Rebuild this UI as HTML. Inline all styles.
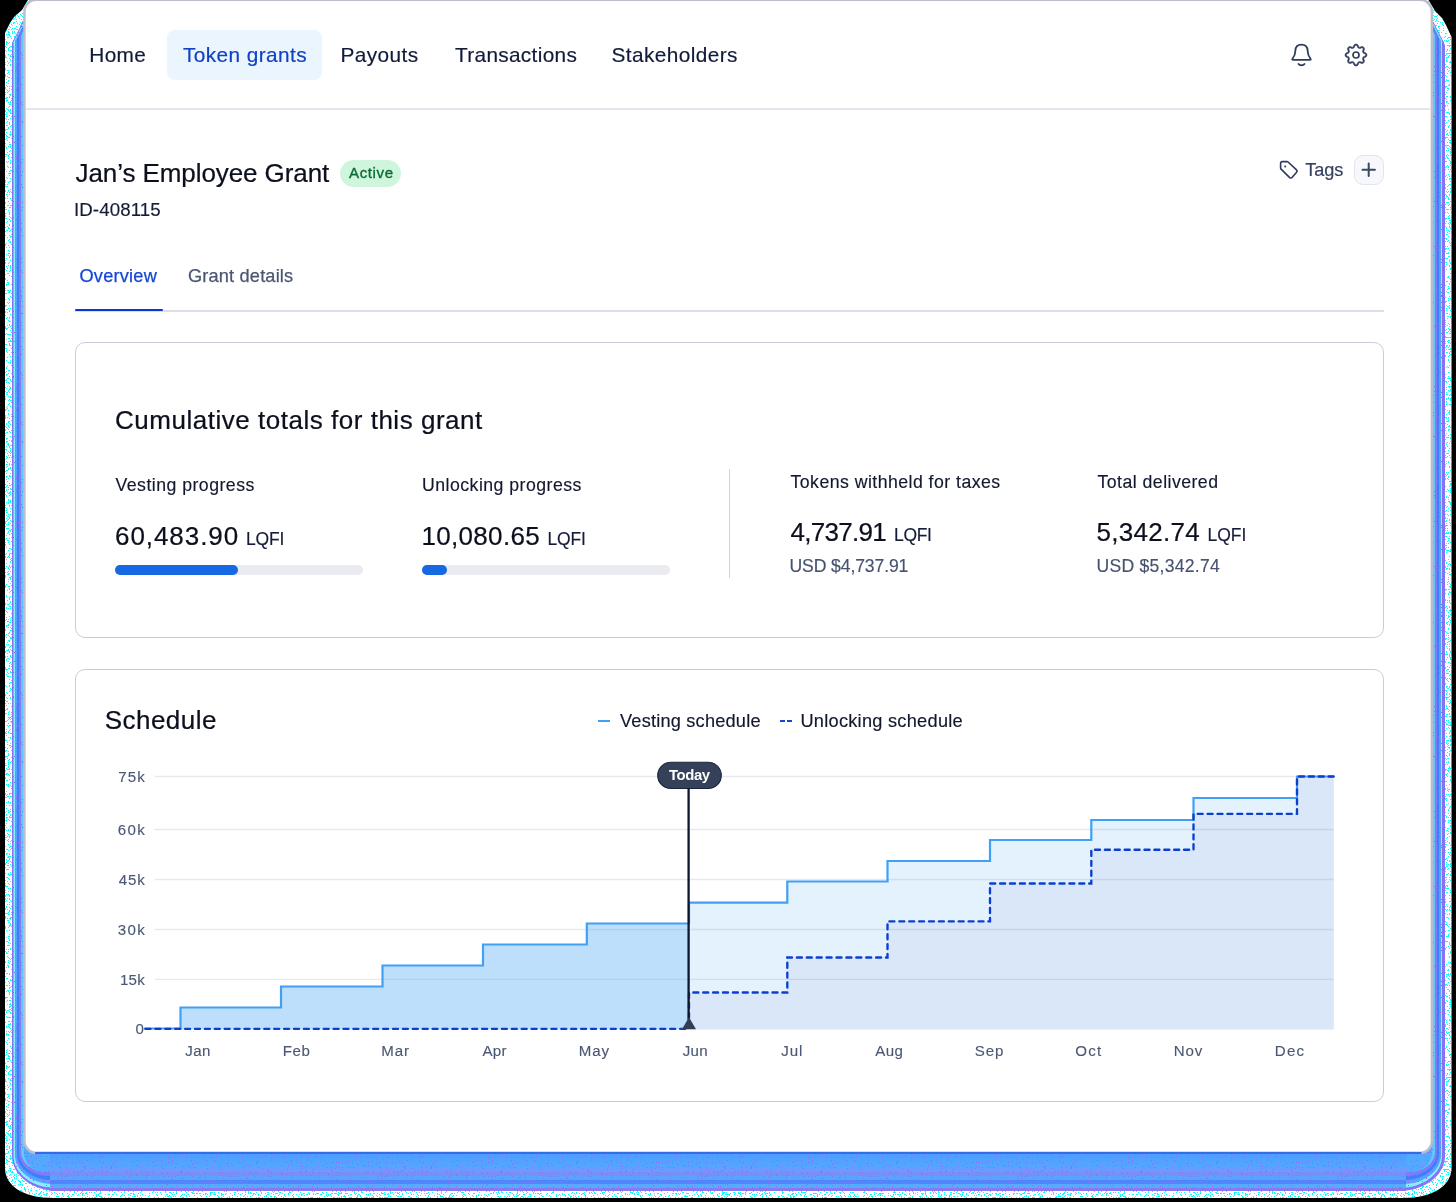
<!DOCTYPE html>
<html lang="en">
<head>
<meta charset="utf-8">
<title>Jan's Employee Grant</title>
<style>
*{box-sizing:border-box;margin:0;padding:0}
html,body{width:1456px;height:1202px;overflow:hidden;background:#000}
body{position:relative;font-family:"Liberation Sans",sans-serif;font-size:16px;color:#0f1733}
.abs{position:absolute}
.t{position:absolute;white-space:nowrap;line-height:1;font-family:"Liberation Sans",sans-serif}
#shadow{position:absolute;left:0;top:0;width:1456px;height:1202px}
#card{position:absolute;left:22.5px;top:-1px;width:1410.3px;height:1154.3px;background:#fff;border:2px solid #b6bbcb;border-top-color:#c6cad7;border-bottom:1.5px solid #1a5cf0;border-radius:13px}
#page{will-change:transform;position:absolute;left:0;top:0;width:1456px;height:1202px}
.panel{border:1.5px solid #c9cdd9;border-radius:10px;background:#fff}
.bar{height:10px;border-radius:5px;background:#e9ebf0}
.fill{height:10px;border-radius:5px;background:#1668e3}
svg{position:absolute;overflow:visible}
</style>
</head>
<body>
<svg id="shadow" width="1456" height="1202" viewBox="0 0 1456 1202">
  <defs><filter id="nz" x="0" y="0" width="1456" height="1202" filterUnits="userSpaceOnUse" color-interpolation-filters="sRGB">
    <feTurbulence type="fractalNoise" baseFrequency="0.75" numOctaves="2" seed="7" result="t"/>
    <feColorMatrix in="t" type="matrix" values="0 0 0 0 0  0 0 0 0 1  0 0 0 0 1  3.2 0 0 0 -1.43" result="c"/>
    <feComponentTransfer in="c" result="d"><feFuncA type="discrete" tableValues="0 1"/></feComponentTransfer>
    <feComposite in="d" in2="SourceGraphic" operator="in"/>
  </filter></defs>
  <path d="M28 0 L22 10 L14 17 L10 23 L5 33 V1168 C5 1185 22 1198 54 1198 H1402.5 C1434 1198 1451.5 1185 1451.5 1168 V37 L1446 25 L1442 18 L1435 11 L1428.5 0 Z" fill="#fbffff"/>
  <path d="M28 0 L22 10 L14 17 L10 23 L5 33 V1168 C5 1185 22 1198 54 1198 H1402.5 C1434 1198 1451.5 1185 1451.5 1168 V37 L1446 25 L1442 18 L1435 11 L1428.5 0 Z" fill="#00ffff" filter="url(#nz)"/>
  <path d="M22.5 22 L12 43.0 V1156 C12 1175.2 32.7 1191 58 1191 H1399 C1424.3 1191 1445 1175.2 1445 1156 V45.0 L1433.5 22 Z" fill="#8673f4"/>
  <path d="M22.5 24 L13.5 42.0 V1156 C13.5 1173.6 32.4 1188 55.5 1188 H1400 C1423.1 1188 1442 1173.6 1442 1156 V41.0 L1433.5 24 Z" fill="#86eeff"/>
  <path d="M22.5 26 L15 41.0 V1155 C15 1171.0 32.1 1184 53 1184 H1403 C1423.9 1184 1441 1171.0 1441 1155 V41.0 L1433.5 26 Z" fill="#56a2ff"/>
  <path d="M22.5 28 L17 39.0 V1154 C17 1168.3 32.3 1180 51 1180 H1405 C1423.7 1180 1439 1168.3 1439 1154 V39.0 L1433.5 28 Z" fill="#3f7dff"/>
  <path d="M22.5 30 L19 37.0 V1153 C19 1165.7 32.5 1176 49 1176 H1407 C1423.5 1176 1437 1165.7 1437 1153 V37.0 L1433.5 30 Z" fill="#7f7cf6"/>
  <path d="M22.5 32 L21 35.0 V1152 C21 1163.0 32.7 1172 47 1172 H1409 C1423.3 1172 1435 1163.0 1435 1152 V35.0 L1433.5 32 Z" fill="#60c8ff"/>
  <path d="M24 1100 V1152 C24 1163.0 32.7 1172 47 1172 H1409 C1423.3 1172 1432 1163.0 1432 1152 V1100 Z" fill="#55a8ff"/>
  <defs><linearGradient id="bg" x1="0" y1="0" x2="0" y2="1">
    <stop offset="0" stop-color="#1a5cf0"/><stop offset=".05" stop-color="#1a5cf0"/>
    <stop offset=".05" stop-color="#4d9fff"/><stop offset=".41" stop-color="#55a6ff"/>
    <stop offset=".41" stop-color="#6a9cff"/><stop offset=".51" stop-color="#6a9cff"/>
    <stop offset=".51" stop-color="#7a8ef8"/><stop offset=".61" stop-color="#7a8ef8"/>
    <stop offset=".61" stop-color="#58a4ff"/><stop offset=".72" stop-color="#58a4ff"/>
    <stop offset=".72" stop-color="#4a86ff"/><stop offset=".82" stop-color="#5a84fa"/>
    <stop offset=".82" stop-color="#58aaff"/><stop offset=".92" stop-color="#58aaff"/>
    <stop offset=".92" stop-color="#8a78f0"/><stop offset="1" stop-color="#8a78f0"/>
  </linearGradient></defs>
  <rect x="50" y="1152" width="1356" height="39" fill="url(#bg)"/>
  <defs><filter id="nz2" x="0" y="0" width="1456" height="1202" filterUnits="userSpaceOnUse" color-interpolation-filters="sRGB">
    <feTurbulence type="fractalNoise" baseFrequency="0.8" numOctaves="2" seed="23" result="t"/>
    <feColorMatrix in="t" type="matrix" values="0 0 0 0 .53  0 0 0 0 .44  0 0 0 0 .96  3.2 0 0 0 -1.78" result="c"/>
    <feComponentTransfer in="c" result="d"><feFuncA type="discrete" tableValues="0 1"/></feComponentTransfer>
    <feComposite in="d" in2="SourceGraphic" operator="in"/>
  </filter></defs>
  <path d="M22.5 22 L12 43.0 V1156 C12 1175.2 32.7 1191 58 1191 H1399 C1424.3 1191 1445 1175.2 1445 1156 V45.0 L1433.5 22 Z" fill="#8870f5" filter="url(#nz2)"/>
</svg>
<svg style="left:0;top:0" width="1456" height="1202" viewBox="0 0 1456 1202">
  <rect x="24.4" y="-0.2" width="1407.5" height="1153" rx="12" fill="#fff" stroke="#b9bdcc" stroke-width="2.5"/>
  <path d="M35 1153 H1421.5" stroke="#0d4ff0" stroke-width="1.5"/>
</svg>
<div id="page">
  <!-- NAV -->
  <div class="abs" style="left:167px;top:30px;width:154.5px;height:49.5px;background:#ebf5fe;border-radius:8px"></div>
  <div class="abs" style="left:25.5px;top:108px;width:1405px;height:1.6px;background:#e3e6ed"></div>
  <!-- bell -->
  <svg style="left:1289px;top:42px" width="24" height="26" viewBox="0 0 24 26" fill="none" stroke="#2e3b59" stroke-width="1.8" stroke-linecap="round" stroke-linejoin="round">
    <path d="M4.1 17.8 H20.9 Q22.3 17.8 21.5 16.8 C19.6 14.5 18.7 12.6 18.6 8.6 C18.5 4.6 16 2.6 12.5 2.6 C9 2.6 6.5 4.6 6.4 8.6 C6.3 12.6 5.4 14.5 3.5 16.8 Q2.7 17.8 4.1 17.8 Z"/>
    <path d="M9.5 21.9 C10.7 23.7 14.3 23.7 15.5 21.9"/>
  </svg>
  <!-- gear -->
  <svg style="left:1345.3px;top:43.8px" width="22" height="22" viewBox="0 0 16 16" fill="#2e3b59" stroke="#2e3b59" stroke-width=".36">
    <circle cx="8" cy="8" r="2.2" fill="none" stroke-width="1.2"/>
    <path d="M9.796 1.343c-.527-1.79-3.065-1.79-3.592 0l-.094.319a.873.873 0 0 1-1.255.52l-.292-.16c-1.64-.892-3.433.902-2.54 2.541l.159.292a.873.873 0 0 1-.52 1.255l-.319.094c-1.79.527-1.79 3.065 0 3.592l.319.094a.873.873 0 0 1 .52 1.255l-.16.292c-.892 1.64.901 3.434 2.541 2.54l.292-.159a.873.873 0 0 1 1.255.52l.094.319c.527 1.79 3.065 1.79 3.592 0l.094-.319a.873.873 0 0 1 1.255-.52l.292.16c1.64.893 3.434-.902 2.54-2.541l-.159-.292a.873.873 0 0 1 .52-1.255l.319-.094c1.79-.527 1.79-3.065 0-3.592l-.319-.094a.873.873 0 0 1-.52-1.255l.16-.292c.893-1.64-.902-3.433-2.541-2.54l-.292.159a.873.873 0 0 1-1.255-.52l-.094-.319zm-2.633.283c.246-.835 1.428-.835 1.674 0l.094.319a1.873 1.873 0 0 0 2.693 1.115l.291-.16c.764-.415 1.6.42 1.184 1.185l-.159.292a1.873 1.873 0 0 0 1.116 2.692l.318.094c.835.246.835 1.428 0 1.674l-.319.094a1.873 1.873 0 0 0-1.115 2.693l.16.291c.415.764-.42 1.6-1.185 1.184l-.291-.159a1.873 1.873 0 0 0-2.693 1.116l-.094.318c-.246.835-1.428.835-1.674 0l-.094-.319a1.873 1.873 0 0 0-2.692-1.115l-.292.16c-.764.415-1.6-.42-1.184-1.185l.159-.291A1.873 1.873 0 0 0 1.945 8.93l-.319-.094c-.835-.246-.835-1.428 0-1.674l.319-.094A1.873 1.873 0 0 0 3.06 4.377l-.16-.292c-.415-.764.42-1.6 1.185-1.184l.292.159a1.873 1.873 0 0 0 2.692-1.115l.094-.319z"/>
  </svg>

  <!-- HEADER -->
  <div class="abs" style="left:340.2px;top:159.6px;width:61.2px;height:27.4px;border-radius:13.7px;background:#cff6dc"></div>
  <!-- tag icon -->
  <svg style="left:1279px;top:159.5px" width="20" height="20" viewBox="0 0 20 20" fill="none" stroke="#2d3a58" stroke-width="1.6" stroke-linecap="round" stroke-linejoin="round">
    <path d="M1.6 3.2 A1.6 1.6 0 0 1 3.2 1.6 H8 a1.6 1.6 0 0 1 1.1 .45 L17.5 9.9 a1.7 1.7 0 0 1 .1 2.4 L13 17.5 a1.6 1.6 0 0 1 -2.3 .1 L2.1 9.1 A1.6 1.6 0 0 1 1.6 8 Z"/>
    <circle cx="6.2" cy="6.4" r="1" fill="#2d3a58" stroke="none"/>
  </svg>
  <div class="abs" style="left:1354px;top:155px;width:29.5px;height:29.5px;border-radius:9px;background:#f7f8fb;border:1.5px solid #e2e5ed"></div>
  <svg style="left:1354px;top:155px" width="30" height="30" viewBox="0 0 30 30" fill="none" stroke="#3a4766" stroke-width="2" stroke-linecap="round">
    <path d="M8.5 14.8 H20.9 M14.7 8.6 V21"/>
  </svg>

  <!-- TABS -->
  <div class="abs" style="left:75px;top:310.2px;width:1309px;height:1.5px;background:#dcdfe8"></div>
  <div class="abs" style="left:75px;top:309.1px;width:88px;height:2.4px;border-radius:1.2px;background:#0c36cc"></div>

  <!-- PANEL 1 -->
  <div class="abs panel" style="left:74.5px;top:342px;width:1309.5px;height:296px"></div>
  <div class="abs bar" style="left:115px;top:565px;width:247.5px"><div class="fill" style="width:123px"></div></div>
  <div class="abs bar" style="left:422px;top:565px;width:248px"><div class="fill" style="width:24.5px"></div></div>
  <div class="abs" style="left:728.5px;top:469px;width:1.5px;height:109px;background:#cfd3dd"></div>

  <!-- PANEL 2 -->
  <div class="abs panel" style="left:74.5px;top:669px;width:1309.5px;height:433px"></div>
  <!-- legend marks -->
  <div class="abs" style="left:598px;top:720px;width:12px;height:2px;background:#3fa0f6"></div>
  <div class="abs" style="left:779.7px;top:720px;width:5px;height:2px;background:#1447d4"></div>
  <div class="abs" style="left:787.2px;top:720px;width:5px;height:2px;background:#1447d4"></div>

  <!-- CHART -->
  <svg style="left:0;top:0" width="1456" height="1202" viewBox="0 0 1456 1202">
    <g stroke="#e6e9ef" stroke-width="1.3">
      <path d="M154.5 776.5H1333.8M154.5 829.5H1333.8M154.5 879.5H1333.8M154.5 929.5H1333.8M154.5 979.4H1333.8"/>
    </g>
    <!-- past vesting fill -->
    <path fill="#3fa0f6" fill-opacity=".34" d="M180.5 1029.5V1007.5H281V986.5H382.5V965.5H483V944.5H586.8V923.5H689V1029.5Z"/>
    <!-- future vesting fill -->
    <path fill="#3fa0f6" fill-opacity=".14" d="M689 1029.5V902.6H787.3V881.5H887.5V861H990V840H1091.3V820H1193.5V798H1297V776.5H1333.8V1029.5Z"/>
    <!-- unlocking fill -->
    <path fill="#2a3a8c" fill-opacity=".056" d="M689 1029.5V992.5H787.3V957.5H887.5V921.3H990V883.5H1091.3V849.7H1193.5V813.8H1297V776.5H1333.8V1029.5Z"/>
    <!-- vesting line -->
    <path fill="none" stroke="#3fa0f6" stroke-width="2.2" d="M144 1028.5H180.5V1007.5H281V986.5H382.5V965.5H483V944.5H586.8V923.5H689V902.6H787.3V881.5H887.5V861H990V840H1091.3V820H1193.5V798H1297V776.5H1333.8"/>
    <!-- unlocking line -->
    <path fill="none" stroke="#0c3fd0" stroke-width="2.35" stroke-linecap="round" stroke-dasharray="5 4.9" d="M145.5 1028.8H689V992.5H787.3V957.5H887.5V921.3H990V883.5H1091.3V849.7H1193.5V813.8H1297V776.5H1333.8"/>
    <!-- today -->
    <rect x="657.7" y="762.3" width="63.6" height="26.2" rx="13.1" fill="#344159" stroke="#1a2540" stroke-width="1.1"/>
    <path d="M688.6 788V1020" stroke="#0f172e" stroke-width="2.3"/>
    <path d="M682 1029.2 L689 1017.2 L696 1029.2Z" fill="#323d55"/>
  </svg>

<!-- text -->
<div class="t" style="left:89.3px;top:45px;font-size:20.8px;color:#111a3a;letter-spacing:0.37px;-webkit-text-stroke:0.18px #111a3a">Home</div>
<div class="t" style="left:183px;top:45px;font-size:20.8px;color:#1141c4;letter-spacing:0.41px;-webkit-text-stroke:0.18px #1141c4">Token grants</div>
<div class="t" style="left:340.5px;top:45px;font-size:20.8px;color:#111a3a;letter-spacing:0.42px;-webkit-text-stroke:0.18px #111a3a">Payouts</div>
<div class="t" style="left:455px;top:45px;font-size:20.8px;color:#111a3a;letter-spacing:0.32px;-webkit-text-stroke:0.18px #111a3a">Transactions</div>
<div class="t" style="left:611.5px;top:45px;font-size:20.8px;color:#111a3a;letter-spacing:0.41px;-webkit-text-stroke:0.18px #111a3a">Stakeholders</div>
<div class="t" style="left:75.5px;top:160px;font-size:26.0px;color:#0c0f1d;letter-spacing:-0.08px;-webkit-text-stroke:0.22px #0c0f1d">Jan’s Employee Grant</div>
<div class="t" style="left:349px;top:165px;font-size:15.1px;color:#0d6a34;letter-spacing:0.6px;-webkit-text-stroke:.35px #0d6a34">Active</div>
<div class="t" style="left:74px;top:201px;font-size:18.7px;color:#141b36;letter-spacing:0.09px;-webkit-text-stroke:0.16px #141b36">ID-408115</div>
<div class="t" style="left:1305.3px;top:161px;font-size:18.2px;color:#34415f;letter-spacing:-0.1px;-webkit-text-stroke:0.16px #34415f">Tags</div>
<div class="t" style="left:79.5px;top:267px;font-size:18.2px;color:#1447d4;letter-spacing:0.21px;-webkit-text-stroke:.25px #1447d4">Overview</div>
<div class="t" style="left:188px;top:267px;font-size:18.2px;color:#4b5672;letter-spacing:0.17px;-webkit-text-stroke:.25px #4b5672">Grant details</div>
<div class="t" style="left:115px;top:407px;font-size:26.0px;color:#0c0f1d;letter-spacing:0.52px;-webkit-text-stroke:0.22px #0c0f1d">Cumulative totals for this grant</div>
<div class="t" style="left:115.5px;top:477px;font-size:17.7px;color:#12182e;letter-spacing:0.47px;-webkit-text-stroke:0.15px #12182e">Vesting progress</div>
<div class="t" style="left:115px;top:523px;font-size:26.0px;color:#0c0f1d;letter-spacing:0.94px;-webkit-text-stroke:0.22px #0c0f1d">60,483.90</div>
<div class="t" style="left:246px;top:531px;font-size:17.5px;color:#151c3a;letter-spacing:-0.17px;-webkit-text-stroke:0.15px #151c3a">LQFI</div>
<div class="t" style="left:422px;top:477px;font-size:17.7px;color:#12182e;letter-spacing:0.47px;-webkit-text-stroke:0.15px #12182e">Unlocking progress</div>
<div class="t" style="left:421.5px;top:523px;font-size:26.0px;color:#0c0f1d;letter-spacing:0.31px;-webkit-text-stroke:0.22px #0c0f1d">10,080.65</div>
<div class="t" style="left:547.5px;top:531px;font-size:17.5px;color:#151c3a;letter-spacing:-0.17px;-webkit-text-stroke:0.15px #151c3a">LQFI</div>
<div class="t" style="left:790.5px;top:474px;font-size:17.7px;color:#12182e;letter-spacing:0.46px;-webkit-text-stroke:0.15px #12182e">Tokens withheld for taxes</div>
<div class="t" style="left:790.5px;top:519px;font-size:26.0px;color:#0c0f1d;letter-spacing:-0.71px;-webkit-text-stroke:0.22px #0c0f1d">4,737.91</div>
<div class="t" style="left:894px;top:527px;font-size:17.5px;color:#151c3a;letter-spacing:-0.33px;-webkit-text-stroke:0.15px #151c3a">LQFI</div>
<div class="t" style="left:789.5px;top:558px;font-size:17.6px;color:#46526f;letter-spacing:-0.12px;-webkit-text-stroke:0.15px #46526f">USD $4,737.91</div>
<div class="t" style="left:1097.5px;top:474px;font-size:17.7px;color:#12182e;letter-spacing:0.46px;-webkit-text-stroke:0.15px #12182e">Total delivered</div>
<div class="t" style="left:1096.5px;top:519px;font-size:26.0px;color:#0c0f1d;letter-spacing:0.29px;-webkit-text-stroke:0.22px #0c0f1d">5,342.74</div>
<div class="t" style="left:1207.5px;top:527px;font-size:17.5px;color:#151c3a;-webkit-text-stroke:0.15px #151c3a">LQFI</div>
<div class="t" style="left:1096.5px;top:558px;font-size:17.6px;color:#46526f;letter-spacing:0.25px;-webkit-text-stroke:0.15px #46526f">USD $5,342.74</div>
<div class="t" style="left:104.75px;top:707px;font-size:26.0px;color:#0c0f1d;letter-spacing:0.46px;-webkit-text-stroke:0.22px #0c0f1d">Schedule</div>
<div class="t" style="left:620px;top:712px;font-size:18.2px;color:#12182e;letter-spacing:0.2px;-webkit-text-stroke:0.16px #12182e">Vesting schedule</div>
<div class="t" style="left:800.4px;top:712px;font-size:18.2px;color:#12182e;letter-spacing:0.27px;-webkit-text-stroke:0.16px #12182e">Unlocking schedule</div>
<div class="t" style="left:118.3px;top:769px;font-size:15.1px;color:#4b5875;letter-spacing:1.05px;-webkit-text-stroke:0.13px #4b5875">75k</div>
<div class="t" style="left:117.8px;top:822px;font-size:15.1px;color:#4b5875;letter-spacing:1.3px;-webkit-text-stroke:0.13px #4b5875">60k</div>
<div class="t" style="left:118.8px;top:872px;font-size:15.1px;color:#4b5875;letter-spacing:0.8px;-webkit-text-stroke:0.13px #4b5875">45k</div>
<div class="t" style="left:117.8px;top:922px;font-size:15.1px;color:#4b5875;letter-spacing:1.3px;-webkit-text-stroke:0.13px #4b5875">30k</div>
<div class="t" style="left:120px;top:972px;font-size:15.1px;color:#4b5875;letter-spacing:0.2px;-webkit-text-stroke:0.13px #4b5875">15k</div>
<div class="t" style="left:135.6px;top:1021px;font-size:15.1px;color:#4b5875;-webkit-text-stroke:0.13px #4b5875">0</div>
<div class="t" style="left:185.3px;top:1043px;font-size:15.1px;color:#4b5875;letter-spacing:0.35px;-webkit-text-stroke:0.13px #4b5875">Jan</div>
<div class="t" style="left:282.8px;top:1043px;font-size:15.1px;color:#4b5875;letter-spacing:0.6px;-webkit-text-stroke:0.13px #4b5875">Feb</div>
<div class="t" style="left:381.3px;top:1043px;font-size:15.1px;color:#4b5875;letter-spacing:0.85px;-webkit-text-stroke:0.13px #4b5875">Mar</div>
<div class="t" style="left:482.4px;top:1043px;font-size:15.1px;color:#4b5875;letter-spacing:0.3px;-webkit-text-stroke:0.13px #4b5875">Apr</div>
<div class="t" style="left:578.7px;top:1043px;font-size:15.1px;color:#4b5875;letter-spacing:0.9px;-webkit-text-stroke:0.13px #4b5875">May</div>
<div class="t" style="left:682.7px;top:1043px;font-size:15.1px;color:#4b5875;letter-spacing:0.35px;-webkit-text-stroke:0.13px #4b5875">Jun</div>
<div class="t" style="left:781.2px;top:1043px;font-size:15.1px;color:#4b5875;letter-spacing:0.9px;-webkit-text-stroke:0.13px #4b5875">Jul</div>
<div class="t" style="left:875.2px;top:1043px;font-size:15.1px;color:#4b5875;letter-spacing:0.4px;-webkit-text-stroke:0.13px #4b5875">Aug</div>
<div class="t" style="left:974.7px;top:1043px;font-size:15.1px;color:#4b5875;letter-spacing:0.9px;-webkit-text-stroke:0.13px #4b5875">Sep</div>
<div class="t" style="left:1075.3px;top:1043px;font-size:15.1px;color:#4b5875;letter-spacing:1.15px;-webkit-text-stroke:0.13px #4b5875">Oct</div>
<div class="t" style="left:1173.7px;top:1043px;font-size:15.1px;color:#4b5875;letter-spacing:0.85px;-webkit-text-stroke:0.13px #4b5875">Nov</div>
<div class="t" style="left:1274.7px;top:1043px;font-size:15.1px;color:#4b5875;letter-spacing:1.3px;-webkit-text-stroke:0.13px #4b5875">Dec</div>
<div class="t" style="left:668.9px;top:768px;font-size:14.9px;color:#ffffff;letter-spacing:-0.38px;font-weight:700;">Today</div>
</div>
</body>
</html>
